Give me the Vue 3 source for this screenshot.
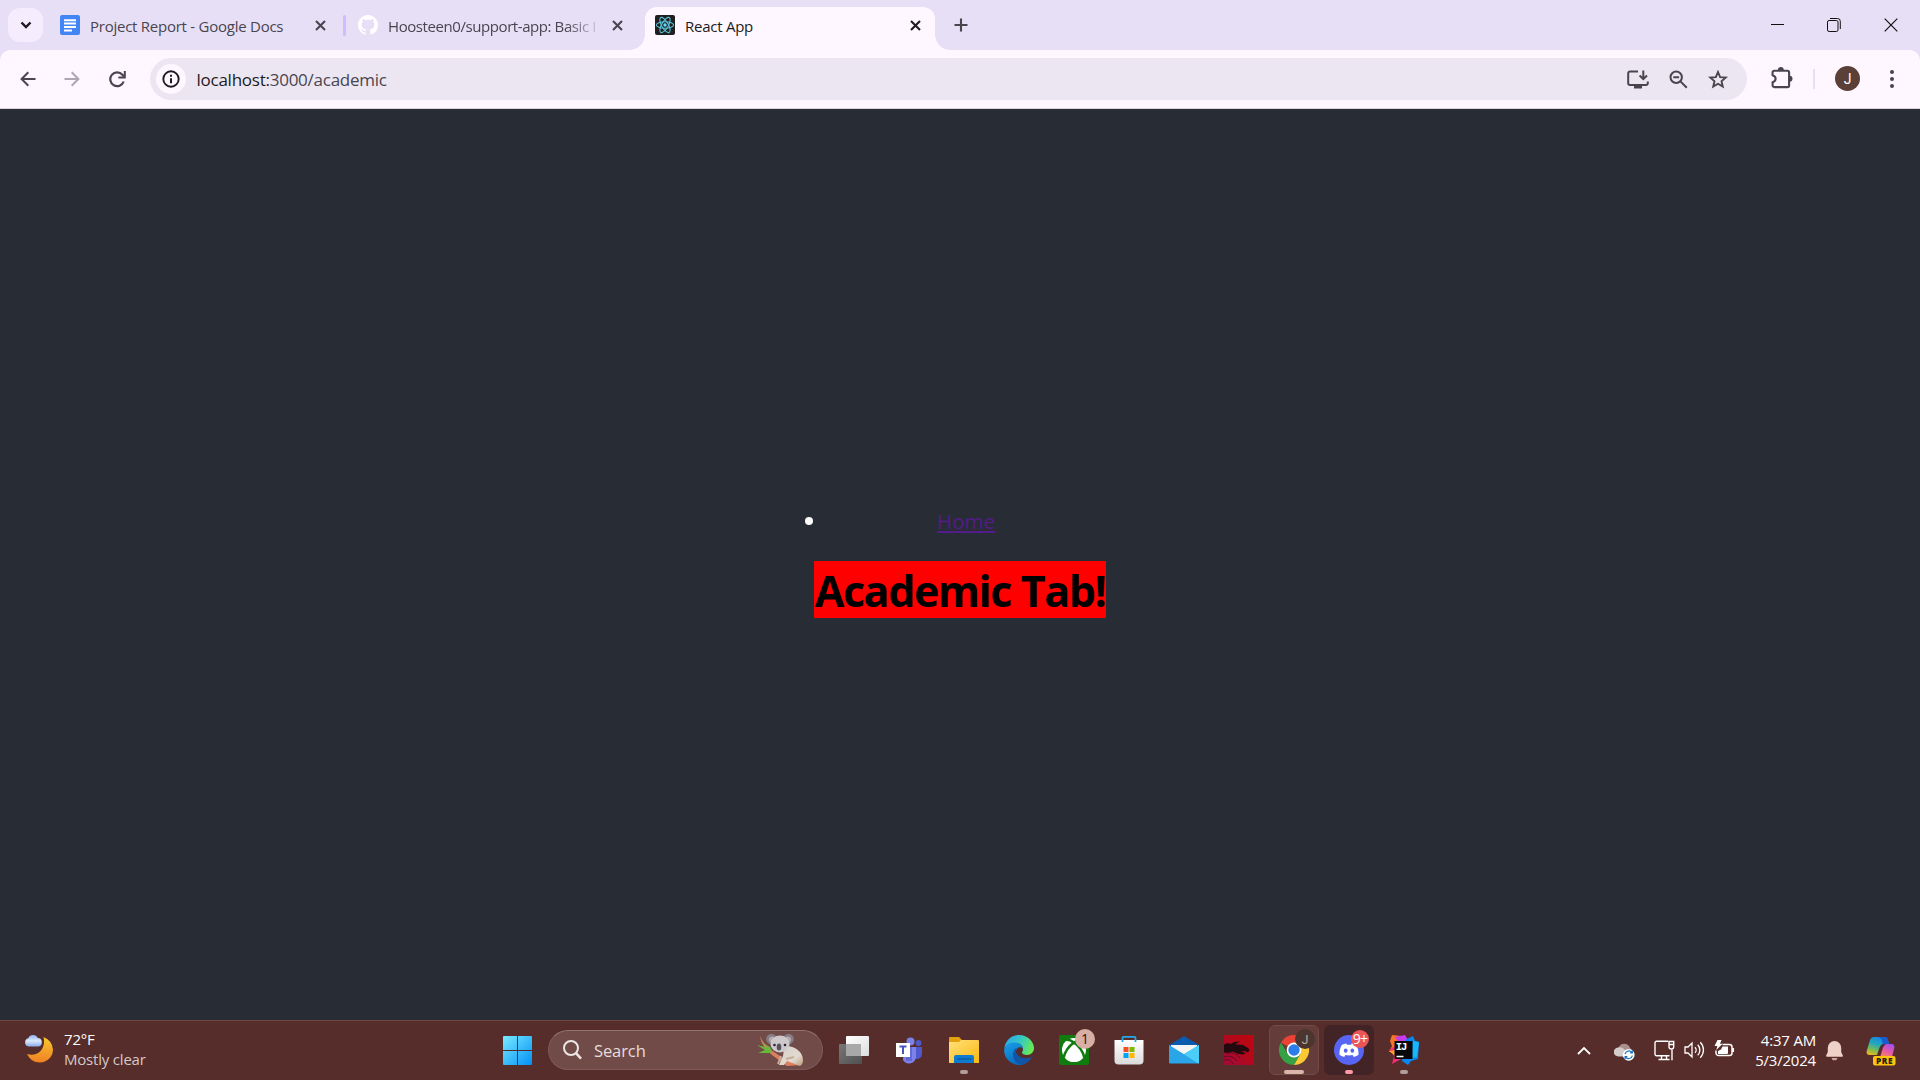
<script setup>
const tabs = [
  { id: 'docs', title: 'Project Report - Google Docs' },
  { id: 'github', title: 'Hoosteen0/support-app: Basic I' },
  { id: 'react', title: 'React App' },
]
</script>

<template>
  <div class="screen">
    <header class="strip">
      <button class="tab-search">
        <svg width="12" height="8" viewBox="0 0 12 8"><path d="M1.5 1.5 6 6l4.500-4.500" fill="none" stroke="#1d1b20" stroke-width="2.400" /></svg>
      </button>
      <div v-for="t in tabs" :key="t.id" class="tab" :class="t.id">
        <svg v-if="t.id === 'docs'" width="20" height="20" viewBox="0 0 20 20">
          <rect width="20" height="20" rx="2" fill="#4285f4" />
          <path d="M4 5.200h12M4 8.600h12M4 12h12M4 15.400h8" stroke="#fff" stroke-width="2" />
        </svg>
        <svg v-else-if="t.id === 'github'" width="20" height="20" viewBox="0 0 16 16">
          <path fill="#fff" d="M8 0C3.580 0 0 3.580 0 8c0 3.540 2.290 6.530 5.470 7.590.4.070.55-.17.55-.38 0-.19-.01-.82-.01-1.490-2.010.37-2.530-.49-2.690-.94-.09-.23-.48-.94-.82-1.130-.28-.15-.68-.52-.01-.53.63-.01 1.080.58 1.230.82.72 1.210 1.870.87 2.330.66.07-.52.28-.87.51-1.070-1.780-.2-3.640-.89-3.640-3.950 0-.87.31-1.590.82-2.150-.08-.2-.36-1.020.08-2.120 0 0 .67-.21 2.200.82.64-.18 1.320-.27 2-.27s1.360.09 2 .27c1.530-1.040 2.200-.82 2.200-.82.44 1.100.16 1.920.08 2.120.51.56.82 1.270.82 2.150 0 3.070-1.870 3.750-3.650 3.950.29.25.54.73.54 1.480 0 1.070-.01 1.930-.01 2.200 0 .21.15.46.55.38A8.010 8.010 0 0 0 16 8c0-4.420-3.580-8-8-8z" />
        </svg>
        <svg v-else width="20" height="20" viewBox="0 0 20 20">
          <rect width="20" height="20" rx="2" fill="#202020" />
          <g fill="none" stroke="#58c4dc" stroke-width="1.100">
            <ellipse cx="10" cy="10" rx="8.600" ry="3.300" />
            <ellipse cx="10" cy="10" rx="8.600" ry="3.300" transform="rotate(60 10 10)" />
            <ellipse cx="10" cy="10" rx="8.600" ry="3.300" transform="rotate(120 10 10)" />
          </g>
          <circle cx="10" cy="10" r="1.700" fill="#61dafb" />
        </svg>
        <span class="tab-title">{{ t.title }}</span>
        <svg class="tab-close" width="11" height="11" viewBox="0 0 11 11"><path d="m1 1 9 9m0-9-9 9" stroke="currentColor" stroke-width="2.100" /></svg>
      </div>
      <svg class="plus" width="14" height="14" viewBox="0 0 14 14"><path d="M7 .5v13M.5 7h13" stroke="#49454f" stroke-width="2.100" /></svg>
      <div class="window-controls">
        <svg width="13" height="13" viewBox="0 0 13 13"><path d="M0 6.500h13" stroke="#111" /></svg>
        <svg width="14" height="14" viewBox="0 0 14 14" fill="none" stroke="#111"><rect x=".5" y="2.500" width="10.500" height="11" rx="1.600" /><path d="M3 .5h7.500a2.800 2.800 0 0 1 2.800 2.800V11" /></svg>
        <svg width="14" height="14" viewBox="0 0 14 14"><path d="m.7.7 12.600 12.600m0-12.600L.7 13.300" stroke="#111" stroke-width="1.200" /></svg>
      </div>
    </header>

    <div class="toolbar-back">
      <div class="toolbar">
        <svg class="back" width="16" height="16" viewBox="0 0 16 16" fill="none" stroke="#49454f" stroke-width="2"><path d="M15.500 8H2M8.300 1.300 1.600 8l6.700 6.700" /></svg>
        <svg class="forward" width="16" height="16" viewBox="0 0 16 16" fill="none" stroke="#aca7b0" stroke-width="2"><path d="M.5 8H14M7.700 1.300 14.400 8l-6.700 6.700" /></svg>
        <svg class="reload" width="17" height="17" viewBox="0 0 17 17" fill="none" stroke="#49454f" stroke-width="2.200"><path d="M14.700 10.500A6.900 6.900 0 1 1 13.400 3.700L15 5.500" /><path d="M15.800 0v6.400H9.400" stroke-width="2" /></svg>
        <div class="omnibox">
          <span class="site-info">
            <svg width="18" height="18" viewBox="0 0 18 18"><circle cx="9" cy="9" r="7.700" fill="none" stroke="#1d1b20" stroke-width="1.900" /><path d="M9 8.200v5M9 4.700v2" stroke="#1d1b20" stroke-width="2" /></svg>
          </span>
          <span class="url"><b>localhost:</b>3000/academic</span>
          <svg class="install" width="22" height="19" viewBox="0 0 22 19" fill="none" stroke="#49454f" stroke-width="2"><path d="M11 1.500H3a1.800 1.800 0 0 0-1.800 1.800v10A1.800 1.800 0 0 0 3 15h16a1.800 1.800 0 0 0 1.800-1.800V11.500M16.300.5v8M12.600 5.500l3.700 3.700L20 5.500" /><path d="M7 17h8" stroke-width="3" /></svg>
          <svg class="magnifier" width="19" height="19" viewBox="0 0 19 19" fill="none" stroke="#49454f" stroke-width="2"><circle cx="7.200" cy="7.200" r="5.700" /><path d="m11.400 11.400 6.400 6.400M4.300 7.200h5.800" /></svg>
          <svg class="star" width="20" height="19" viewBox="0 0 20 19"><path d="m10 2 2.150 5.100 5.550.48-4.200 3.650 1.260 5.400L10 13.750l-4.760 2.880 1.260-5.400-4.200-3.650 5.550-.48Z" fill="none" stroke="#49454f" stroke-width="1.900" /></svg>
        </div>
        <svg class="puzzle" width="22" height="22" viewBox="0 0 22 22"><path d="M3.200 3.700h13.300a1.600 1.600 0 0 1 1.600 1.600v13.200a1.600 1.600 0 0 1-1.600 1.600H3.200a1.600 1.600 0 0 1-1.600-1.600v-3.300c4-1.200 4-5.700 0-6.900v-3a1.600 1.600 0 0 1 1.600-1.600Z" fill="none" stroke="#49454f" stroke-width="2.100" /><path d="M6.800 3a3 3 0 0 1 6 0ZM18.500 8.800a3 3 0 0 1 0 6Z" fill="#49454f" /></svg>
        <i class="divider"></i>
        <span class="avatar">J</span>
        <svg class="kebab" width="4" height="18" viewBox="0 0 4 18" fill="#49454f"><circle cx="2" cy="2" r="2" /><circle cx="2" cy="9" r="2" /><circle cx="2" cy="16" r="2" /></svg>
      </div>
    </div>

    <main class="page">
      <ul><li><a href="#">Home</a></li></ul>
      <h1>Academic Tab!</h1>
    </main>

    <footer class="taskbar">
      <div class="weather">
        <svg width="30" height="30" viewBox="0 0 30 30">
          <defs>
            <linearGradient id="moon" x1="0" y1="0" x2="0" y2="1"><stop stop-color="#f6c92d" /><stop offset="1" stop-color="#f08024" /></linearGradient>
            <linearGradient id="cloud" x1="0" y1="0" x2="0" y2="1"><stop stop-color="#8fb4f0" /><stop offset=".5" stop-color="#dce8fb" /><stop offset="1" stop-color="#8facea" /></linearGradient>
          </defs>
          <path d="M19.500 3A14 14 0 0 1 29 15.500C29 23 23 28.500 16 28.500c-6 0-10.500-3.500-13-8.500 5 1.500 10.500.5 13.800-3.300C20 13 20.700 8 19.500 3Z" fill="url(#moon)" />
          <path d="M4.500 12.500a4.200 4.200 0 0 1-.2-8.200A5.200 5.200 0 0 1 13.800 4a4.300 4.300 0 0 1 .6 8.500Z" fill="url(#cloud)" />
        </svg>
        <div class="weather-text"><b>72°F</b><span>Mostly clear</span></div>
      </div>

      <div class="apps">
        <div class="slot">
          <svg width="29" height="29" viewBox="0 0 29 29">
            <defs><linearGradient id="win" gradientUnits="userSpaceOnUse" x1="0" y1="0" x2="29" y2="29"><stop stop-color="#79eaff" /><stop offset="1" stop-color="#0290f5" /></linearGradient></defs>
            <path d="M1 0h13v14H0V1a1 1 0 0 1 1-1ZM15 0h13a1 1 0 0 1 1 1v13H15ZM0 15h14v14H1a1 1 0 0 1-1-1ZM15 15h14v13a1 1 0 0 1-1 1H15Z" fill="url(#win)" />
          </svg>
        </div>
        <div class="search">
          <svg width="19" height="20" viewBox="0 0 19 20" fill="none" stroke="#eee6e5" stroke-width="2"><circle cx="8" cy="8" r="7" /><path d="m13 13.200 5 5.500" stroke-width="2.500" /></svg>
          <span>Search</span>
          <svg class="koala" width="47" height="34" viewBox="0 0 47 34">
            <defs><linearGradient id="fur" x1="0" y1="0" x2="1" y2="1"><stop stop-color="#d7d2cf" /><stop offset=".65" stop-color="#e3d9cf" /><stop offset="1" stop-color="#b99a79" /></linearGradient></defs>
            <path d="M3 3c2 5 6 10 11 14l15 10 15 5-14 1L15 22C8 16 4 10 3 3Z" fill="#dc805f" />
            <path d="m0 12 12 3 3 5H1l7-3Zm4-3 9 5 2 4Z" fill="#67b83b" />
            <path d="M29 13c9 0 17 6 17 14 0 3-1 5-3 6L30 28l-3 4h-5l4-9 1-7Z" fill="url(#fur)" />
            <circle cx="14.500" cy="6" r="5.300" fill="#857d83" /><circle cx="31.500" cy="6" r="5.300" fill="#857d83" />
            <circle cx="15" cy="6.500" r="3" fill="#b6aab0" /><circle cx="31" cy="6.500" r="3" fill="#b6aab0" />
            <ellipse cx="23" cy="11" rx="9.500" ry="8.500" fill="#cdc9ca" />
            <ellipse cx="22" cy="14" rx="2.300" ry="3.600" fill="#56505f" />
            <circle cx="17.500" cy="12" r="1.300" fill="#29232d" /><circle cx="28" cy="12" r="1.300" fill="#29232d" />
            <path d="m29 26 8-2M24 23l-3 8" stroke="#c6af99" stroke-width="2" />
          </svg>
        </div>

        <div class="slot first">
          <svg width="30" height="28" viewBox="0 0 30 28">
            <defs>
              <linearGradient id="tvd" x1="0" y1="0" x2="1" y2="1"><stop stop-color="#777" /><stop offset="1" stop-color="#505050" /></linearGradient>
              <linearGradient id="tvl" x1="0" y1="0" x2="1" y2="1"><stop stop-color="#fff" /><stop offset="1" stop-color="#ddd" /></linearGradient>
            </defs>
            <rect y="8" width="23" height="20" rx="1" fill="url(#tvd)" /><rect x="7" width="23" height="20" rx="1" fill="url(#tvl)" /><path d="M7 8h15v12H7Z" fill="#a8a8a8" />
          </svg>
        </div>
        <div class="slot">
          <svg width="28" height="28" viewBox="0 0 28 28">
            <circle cx="23.500" cy="7" r="2.900" fill="#5059c9" /><path d="M19 11h8v7a5 5 0 0 1-8 4Z" fill="#5059c9" />
            <circle cx="15.500" cy="5.500" r="4" fill="#7b83eb" /><path d="M9 11h12v10a7 7 0 0 1-13 3Z" fill="#7b83eb" />
            <path d="M10 11h7v14h-6Z" fill="#4b53bc" opacity=".5" /><rect x="1" y="7" width="14" height="14" fill="#fff" />
            <path d="M4.500 10.500h7M8 10.500V18" stroke="#4b53bc" stroke-width="2" fill="none" />
          </svg>
        </div>
        <div class="slot">
          <svg width="30" height="28" viewBox="0 0 30 28">
            <defs><linearGradient id="fold" x1="0" y1="0" x2="1" y2="1"><stop stop-color="#ffe07c" /><stop offset="1" stop-color="#fdb910" /></linearGradient></defs>
            <path d="M0 2a1 1 0 0 1 1-1h9l3 3v5H0Z" fill="#e5a00d" /><path d="M0 6h10l2-2h17a1 1 0 0 1 1 1v22H0Z" fill="url(#fold)" />
            <path d="M5 27v-6a2 2 0 0 1 2-2h16a2 2 0 0 1 2 2v6Z" fill="#0c7bd0" /><path d="M8 23h14" stroke="#0a4f91" />
          </svg>
          <i class="run"></i>
        </div>
        <div class="slot">
          <svg width="30" height="30" viewBox="0 0 30 30">
            <defs>
              <linearGradient id="edgeTop" x1="0" y1=".3" x2="1" y2=".6"><stop stop-color="#2ba9ec" /><stop offset=".5" stop-color="#35c9c2" /><stop offset="1" stop-color="#6bec4e" /></linearGradient>
              <linearGradient id="edgeLow" x1="0" y1="0" x2=".5" y2="1"><stop stop-color="#1a9fe8" /><stop offset="1" stop-color="#0669bd" /></linearGradient>
            </defs>
            <path d="M.3 13.500C1 6 7 0 15 0c9 0 15 7 15 13 0 4-3 7-7 7-3 0-5-1-5-2.500 0-1 1.300-1.600 1-4C18.500 10 15 8 11 8 6 8 2 10 .3 13.500Z" fill="url(#edgeTop)" />
            <path d="M.1 15C1 10 5 7.500 10.500 7.500c4.500 0 8.500 2.500 8.500 6.500-2-3-7-2-7 3 0 6 5 10 12 9-2 2.500-5.500 4-9 4A15 15 0 0 1 .1 15Z" fill="url(#edgeLow)" />
            <path d="M12.800 12.500C9 15 8 20 10 24c2 4 5 5.500 9 5.400 3.700-1 6.700-3.400 8.400-6.400.3-.7-.2-1-.8-.7C20 25.500 12 21 12 16c0-1.500.3-2.500.8-3.500Z" fill="#1254a5" />
          </svg>
        </div>
        <div class="slot">
          <svg width="30" height="30" viewBox="0 0 30 30">
            <rect width="30" height="30" rx="2" fill="#107c10" /><circle cx="15" cy="15" r="12" fill="#fff" />
            <path d="M7 5c3-1 6 1 8 3 2-2 5-4 8-3M15 7.500C10 11 6 17 4.700 22.500M15 7.500c5 3.500 9 9.500 10.300 15" fill="none" stroke="#107c10" stroke-width="2.600" />
            <path d="M15 13c-4 3-7 7-8 11 2 2 5 3 8 3s6-1 8-3c-1-4-4-8-8-11Z" fill="#fff" />
          </svg>
          <span class="badge xbox-badge">1</span>
        </div>
        <div class="slot">
          <svg width="30" height="30" viewBox="0 0 30 30">
            <defs><linearGradient id="bag" x1="0" y1="0" x2="0" y2="1"><stop stop-color="#fff" /><stop offset="1" stop-color="#dadada" /></linearGradient></defs>
            <path d="M.5 5h29v20.500a4 4 0 0 1-4 4h-21a4 4 0 0 1-4-4Z" fill="url(#bag)" />
            <path d="M8.500 7V2.800A1 1 0 0 1 9.500 1.800h11a1 1 0 0 1 1 1V7" fill="none" stroke="#22a9e5" stroke-width="1.800" />
            <path d="M9.500 12h5v5h-5Z" fill="#f25022" /><path d="M15.500 12h5v5h-5Z" fill="#7fba00" /><path d="M9.500 18h5v5h-5Z" fill="#00a4ef" /><path d="M15.500 18h5v5h-5Z" fill="#ffb900" />
          </svg>
        </div>
        <div class="slot">
          <svg width="30" height="28" viewBox="0 0 30 28">
            <path d="M0 9 15 0l15 9v6H0Z" fill="#0a5aad" /><path d="M2 9h26v6L15 20 2 13Z" fill="#f4f4f4" />
            <path d="M30 9v18H0Z" fill="#35c3f3" /><path d="m0 9 30 18.500H1a1 1 0 0 1-1-1Z" fill="#2aa5e8" /><path d="M15 18.300 30 9v17.500a1 1 0 0 1-.7 1Z" fill="#4bcdf8" />
          </svg>
        </div>
        <div class="slot">
          <svg width="30" height="30" viewBox="0 0 30 30">
            <defs><linearGradient id="drg" x1="0" y1="1" x2="1" y2="0"><stop stop-color="#a10a3a" /><stop offset=".6" stop-color="#b50818" /><stop offset="1" stop-color="#bd0710" /></linearGradient></defs>
            <rect width="30" height="30" fill="url(#drg)" />
            <path d="M0 9.500 4 8l3 1 3-2 6-.5-5 2.800 8 .7 5 3 1.500 2-1.500 2.500-3-1.500-4 .5 5 1.500-3 1.500-6-1-4-2-4 1.500-5-.5Z" fill="#22090e" />
            <path d="M0 22c5-2 10 0 13 4M0 25c4-1 7 0 9 4M2 18.500c8-2 12 1 14 5" stroke="#610a25" fill="none" />
          </svg>
        </div>
        <div class="slot chrome">
          <svg width="30" height="30" viewBox="0 0 30 30">
            <path d="M15 15 2 7.500A15 15 0 0 1 28 7.500H15Z" fill="#ea4335" />
            <path d="M2 7.500A15 15 0 0 0 15 30l6.500-11.200L15 15l-6.500 3.700Z" fill="#34a145" />
            <path d="M28 7.500A15 15 0 0 1 15 30l6.500-11.300L15 7.500Z" fill="#fcc934" />
            <circle cx="15" cy="15" r="7.400" fill="#fff" /><circle cx="15" cy="15" r="5.700" fill="#2b7de9" />
          </svg>
          <span class="badge profile-badge">J</span><i class="run wide"></i>
        </div>
        <div class="slot discord">
          <svg width="30" height="30" viewBox="0 0 30 30">
            <circle cx="15" cy="15" r="15" fill="#5865f2" />
            <path d="M12.300 8.500c-2 .3-3.500.9-4.500 1.500C6 13 5.200 16.500 5.500 19.700c1.600 1.200 3.200 1.800 4.700 2.200l1.200-1.900c2.400.6 4.800.6 7.200 0l1.200 1.900c1.500-.4 3.100-1 4.700-2.200.3-3.500-.5-6.700-2.300-9.700-1-.6-2.500-1.200-4.500-1.500l-.7 1.300h-4Z" fill="#fff" />
            <ellipse cx="11.700" cy="15.700" rx="1.900" ry="2.100" fill="#5865f2" /><ellipse cx="18.300" cy="15.700" rx="1.900" ry="2.100" fill="#5865f2" />
          </svg>
          <span class="badge count-badge">9+</span><i class="run red"></i>
        </div>
        <div class="slot">
          <svg width="30" height="30" viewBox="0 0 30 30">
            <path d="m3 0 9 1-2 13L0 17l3-6-2-5Z" fill="#f4742a" /><path d="m0 15 8-5 4 14-9 5 2-8Z" fill="#f72c74" /><path d="m6 2 10-2 3 5-9 3Z" fill="#c63bf0" />
            <path d="m16 5 8-4 2 5 4 1-1 17-7 2-3 4-6-4Z" fill="#0887f2" /><path d="m24 6 6 1-2 15-5 1Z" fill="#18b7f7" /><path d="m0 16 7-1 1 8-4-4Z" fill="#fca421" />
            <path d="M5.500 6h18v18h-18Z" fill="#08070c" />
            <text x="6.800" y="14.800" fill="#fff" font-family="Liberation Mono, monospace" font-size="10.500" font-weight="700" textLength="11.500">IJ</text>
            <path d="M7.500 21.500h7" stroke="#fff" stroke-width="1.500" />
          </svg>
          <i class="run"></i>
        </div>
      </div>

      <div class="tray">
        <svg class="chevron" width="14" height="9" viewBox="0 0 14 9"><path d="m1 8 6-6 6 6" fill="none" stroke="#fff" stroke-width="1.800" /></svg>
        <svg class="onedrive" width="21" height="18" viewBox="0 0 21 18">
          <path d="M5 4a6 6 0 0 1 11 1c2 1 2.500 3 2 5L8 9Z" fill="#a98f8d" /><path d="M4.500 13.500A4.500 4.500 0 0 1 4 4.500c4-.7 6 1.500 8 4l3 5Z" fill="#d4cccb" />
          <circle cx="14.700" cy="11.800" r="5.900" fill="#fff" /><path d="M11 11a4 4 0 0 1 7-1.500M18.400 12.600a4 4 0 0 1-7 1.500M18.300 7.500v2.300H16M11.100 16v-2.300h2.300" fill="none" stroke="#1473c8" stroke-width="1.200" />
        </svg>
        <svg class="network" width="21" height="21" viewBox="0 0 21 21" fill="none" stroke="#fff" stroke-width="1.400"><path d="M14 1.200H2.500A1.500 1.500 0 0 0 1 2.700v11.600a1.500 1.500 0 0 0 1.500 1.500h13M4.500 19.500h11M7.500 16v3.500M12.500 16v3.500M18 9.500v10.800" /><path d="M15 1.500h4.700v5.200a2.300 2.300 0 0 1-4.700 0ZM15 4.500h4.700" /></svg>
        <svg class="speaker" width="21" height="18" viewBox="0 0 21 18" fill="none" stroke="#fff" stroke-width="1.300"><path d="M1 6h3l4-4v14l-4-4H1ZM11 6.200a4 4 0 0 1 0 5.600M13.700 3.700a7.500 7.500 0 0 1 0 10.600M16.300 1.300a11 11 0 0 1 0 15.400" /></svg>
        <svg class="battery" width="21" height="18" viewBox="0 0 21 18"><path d="M8.500 4.500h7a2.500 2.500 0 0 1 2.500 2.500v6a2.500 2.500 0 0 1-2.500 2.500h-11A2.500 2.500 0 0 1 2 13v-2.500M19.300 8v4" fill="none" stroke="#fff" stroke-width="1.500" /><path d="M8.500 6.500H14V13a1 1 0 0 1-1 1H4v-3l3-1.500ZM3.500 0h4L6 3.700h2.600L2.300 10l1-4H.5Z" fill="#fff" /></svg>
        <div class="clock"><span class="time">4:37 AM</span><span class="date">5/3/2024</span></div>
        <svg class="bell" width="17" height="20" viewBox="0 0 17 20"><path d="M8.500 0A6.700 6.700 0 0 1 15.200 6.700V11l1.600 3.500a.8.8 0 0 1-.8 1.200H1a.8.8 0 0 1-.8-1.200L1.800 11V6.700A6.700 6.700 0 0 1 8.500 0Z" fill="#efd2c7" /><path d="M5.700 17h5.600a2.800 2.300 0 0 1-5.600 0Z" fill="#cfa79e" /></svg>
        <svg class="copilot" width="30" height="29" viewBox="0 0 30 29">
          <defs>
            <linearGradient id="cpa" x1=".6" y1="0" x2=".2" y2="1"><stop stop-color="#1686e5" /><stop offset=".4" stop-color="#20a8bd" /><stop offset=".75" stop-color="#84bd4e" /><stop offset="1" stop-color="#f0b51f" /></linearGradient>
            <linearGradient id="cpb" x1=".8" y1="0" x2=".3" y2="1"><stop stop-color="#a44cf2" /><stop offset=".55" stop-color="#e65aa5" /><stop offset="1" stop-color="#fb875d" /></linearGradient>
          </defs>
          <path d="M8 0h11c3 0 3 4 4 7h-5c-3 0-4 2-5 5l-2 6H4c-3 0-4-2-3-5L4 3c1-2 2-3 4-3Z" fill="url(#cpa)" /><path d="M12 0h7c3 0 3 4 4 7h-6c-1-3-1-6-5-7Z" fill="#185bd0" />
          <path d="M20 7h5c3 0 4 2 3 5l-2 8H12c3 0 3-3 4-6 1-4 2-6 4-7Z" fill="url(#cpb)" />
          <rect x="7" y="19" width="22.500" height="9.500" rx="2" fill="#fcc40d" />
          <text x="18.300" y="26.800" text-anchor="middle" font-family="Open Sans, sans-serif" font-size="8.300" font-weight="800" textLength="16.500" fill="#2a2010">PRE</text>
        </svg>
      </div>
    </footer>
  </div>
</template>

<style>
body { margin: 0; overflow: hidden; }
</style>

<style scoped>
.screen { width: 1920px; height: 1080px; display: flex; flex-direction: column; font-family: "Open Sans", "Noto Sans", sans-serif; overflow: hidden; }
svg { display: block; flex: none; }
* { box-sizing: border-box; }

.strip { height: 50px; flex: none; display: flex; background: #e7dff6; padding-left: 8px; color: #49454f; }
.tab-search { width: 35px; height: 34px; margin-top: 8px; padding: 0; border: 0; border-radius: 12px; background: #f5edfe; display: flex; align-items: center; justify-content: center; }
.tab { display: flex; align-items: center; height: 43px; margin-top: 7px; padding-bottom: 7px; position: relative; }
.tab-title { font-size: 15px; line-height: 20px; white-space: nowrap; margin-left: 10px; padding-top: 1px; letter-spacing: -0.25px; }
.tab-close { margin-left: auto; }
.docs { width: 303px; padding-left: 17px; padding-right: 20px; }
.docs::after { content: ""; position: absolute; right: 0; top: 8px; width: 3px; height: 21px; border-radius: 2px; background: #d0bcff; }
.github { width: 299px; padding-left: 12px; padding-right: 22px; }
.github .tab-title { letter-spacing: -0.42px; -webkit-mask: linear-gradient(to right, #000 178px, transparent 215px); mask: linear-gradient(to right, #000 178px, transparent 215px); }
.react { width: 290px; padding-left: 10px; padding-right: 14px; background: #fef7ff; border-radius: 12px 12px 0 0; color: #1d1b20; }
.react::before, .react::after { content: ""; position: absolute; bottom: 0; width: 15px; height: 15px; }
.react::before { left: -15px; background: radial-gradient(circle at 0 0, transparent 14.5px, #fef7ff 15px); }
.react::after { right: -15px; background: radial-gradient(circle at 100% 0, transparent 14.5px, #fef7ff 15px); }
.plus { margin: 18px 0 0 19px; }
.window-controls { margin-left: auto; padding: 18px 22px 0 0; display: flex; gap: 43px; }

.toolbar-back { height: 59px; flex: none; background: #e7dff6; }
.toolbar { height: 59px; display: flex; align-items: center; background: #fef7ff; border-radius: 10px 10px 0 0; padding-left: 20px; border-bottom: 1px solid #d9d3dc; }
.forward { margin-left: 28px; }
.reload { margin-left: 29px; }
.omnibox { margin-left: 24px; width: 1597px; height: 42px; border-radius: 21px; background: #ece6f2; display: flex; align-items: center; padding-left: 6px; }
.site-info { width: 30px; height: 30px; border-radius: 50%; background: #fef7ff; display: flex; align-items: center; justify-content: center; }
.url { margin-left: 10.5px; font-size: 17px; letter-spacing: -0.25px; color: #49454f; flex: 1; line-height: 24px; padding-top: 2px; }
.url b { font-weight: 400; color: #1d1b20; }
.magnifier { margin-left: 20px; }
.star { margin: 0 19px 0 20px; }
.puzzle { margin-left: 24px; margin-top: -2px; }
.divider { width: 2px; height: 20px; margin-left: 20px; background: #e7dff6; }
.avatar { width: 25px; height: 25px; margin: -1px 0 0 20px; border-radius: 50%; background: #5b4038; color: #fff; font-family: Roboto, sans-serif; font-size: 14px; line-height: 26px; text-align: center; }
.kebab { margin-left: 30px; }

.page { height: 911px; flex: none; background: #282c34; display: flex; flex-direction: column; align-items: center; padding-top: 397px; }
ul { margin: 0; padding: 0 0 0 12px; width: 292px; list-style: none; }
li { position: relative; text-align: center; height: 30px; line-height: 30px; font-size: 20.5px; }
li::before { content: ""; position: absolute; left: -21px; top: 11px; width: 8px; height: 8px; border-radius: 50%; background: #fff; }
a { color: #551a8b; text-decoration: underline; text-decoration-thickness: 2px; text-underline-offset: 2px; }
h1 { margin: 25px 0 0; width: 292px; height: 57px; background: #f00; color: #000; font-size: 43px; line-height: 59px; font-weight: 700; white-space: nowrap; display: flex; justify-content: center; letter-spacing: -1.45px; }

.taskbar { height: 60px; flex: none; display: flex; background: #562d2a; border-top: 1px solid #6d4843; color: #fff; }
.weather { width: 492px; display: flex; padding: 13px 0 0 24px; }
.weather-text { margin: -5px 0 0 10px; display: flex; flex-direction: column; font-size: 15px; line-height: 20px; letter-spacing: -0.2px; }
.weather-text b { font-weight: 400; }
.weather-text span { color: #d5c8c7; }
.apps { display: flex; gap: 5px; padding-top: 4px; }
.slot { width: 50px; height: 50px; display: flex; align-items: center; justify-content: center; position: relative; border-radius: 6px; }
.slot.first { margin-left: 1px; }
.search { width: 275px; height: 40px; margin: 5px 0 0 1px; border-radius: 20px; background: #704b48; border: 1px solid #7e5c59; border-top-color: #947471; display: flex; align-items: center; padding-left: 14px; }
.search span { margin-left: 12px; font-size: 16.5px; letter-spacing: -0.1px; color: #e6dcdb; }
.koala { margin-left: auto; margin-right: 18px; }
.chrome { background: #643c39; border: 1px solid #704b47; }
.discord { background: #432426; }
.run { position: absolute; bottom: 1px; left: 50%; margin-left: -4px; width: 8px; height: 4px; border-radius: 2px; background: #b19e9c; }
.run.wide { width: 20px; margin-left: -10px; bottom: 0; background: #dbb5aa; }
.run.red { background: #ff99a4; }
.badge { position: absolute; border-radius: 50%; text-align: center; }
.xbox-badge { width: 20px; height: 20px; left: 26px; top: 4px; background: #d9aea5; color: #2c1512; font-size: 14px; line-height: 20px; }
.profile-badge { width: 20px; height: 20px; left: 25px; top: 3px; background: #4d352f; color: #b9aaa5; font-family: Roboto, sans-serif; font-size: 12.5px; line-height: 21px; }
.count-badge { width: 18px; height: 18px; left: 27px; top: 5px; background: #ec5558; color: #fff; font-size: 14px; line-height: 18px; letter-spacing: -0.8px; }

.tray { margin-left: auto; display: flex; align-items: center; padding-right: 24px; }
.chevron { margin-top: -1px; }
.onedrive { margin-left: 23px; margin-top: 2px; }
.network { margin-left: 19px; margin-top: -1px; }
.speaker { margin-left: 9px; margin-top: -1px; }
.battery { margin-left: 9px; margin-top: -3px; }
.clock { width: 81px; margin-top: -2px; display: flex; flex-direction: column; align-items: flex-end; font-size: 15px; line-height: 20px; letter-spacing: -0.2px; }
.bell { margin-left: 10px; margin-top: 0; }
.copilot { margin-left: 23px; margin-top: 1px; }
</style>
